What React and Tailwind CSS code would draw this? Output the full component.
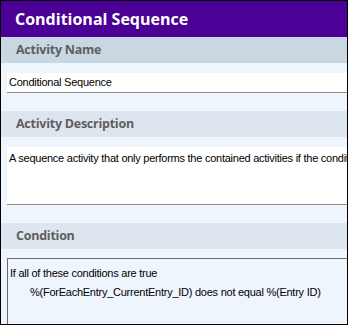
import React from "react";

const Header = ({ children, active }) => (
  <div
    className={`h-[26px] shrink-0 flex items-center pl-[15px] text-[12.5px] font-bold text-[#5e5e5e] font-['Open_Sans','Noto_Sans',sans-serif] ${
      active ? "bg-[#c9d7e3]" : "bg-[#dde5ee]"
    }`}
  >
    {children}
  </div>
);

export default function App() {
  return (
    <div className="w-[348px] h-[325px] border border-black bg-[#eef5fd] overflow-hidden flex flex-col font-['Liberation_Sans',Arial,sans-serif] text-[11px] tracking-[-0.25px] text-black">
      {/* Title bar */}
      <div className="h-[36px] shrink-0 bg-[#4b0096] flex items-center pl-[14px] tracking-normal">
        <span className="text-white font-bold text-[16px] font-['Open_Sans','Noto_Sans',sans-serif]">
          Conditional Sequence
        </span>
      </div>

      <Header active>Activity Name</Header>
      <div className="pt-[10px] pl-[6px] h-[48px] shrink-0">
        <div className="h-[20px] bg-white border-b border-[#8a8a8a] flex items-center pl-[2px] whitespace-nowrap">
          Conditional Sequence
        </div>
      </div>

      <Header>Activity Description</Header>
      <div className="pt-[10px] pl-[6px] h-[86px] shrink-0">
        <div className="h-[58px] bg-white border-b border-[#8a8a8a] pl-[2px] pt-[3px] whitespace-nowrap overflow-hidden">
          A sequence activity that only performs the contained activities if the condition is true
        </div>
      </div>

      <Header>Condition</Header>
      <div className="pt-[9px] pl-[6px] flex-1 flex flex-col">
        <div className="flex-1 border-t border-l border-[#6b6b6b] pl-[2px] pt-[5px] whitespace-nowrap overflow-hidden leading-[19px]">
          <div>If all of these conditions are true</div>
          <div className="pl-[20px]">%(ForEachEntry_CurrentEntry_ID) does not equal %(Entry ID)</div>
        </div>
      </div>
    </div>
  );
}
